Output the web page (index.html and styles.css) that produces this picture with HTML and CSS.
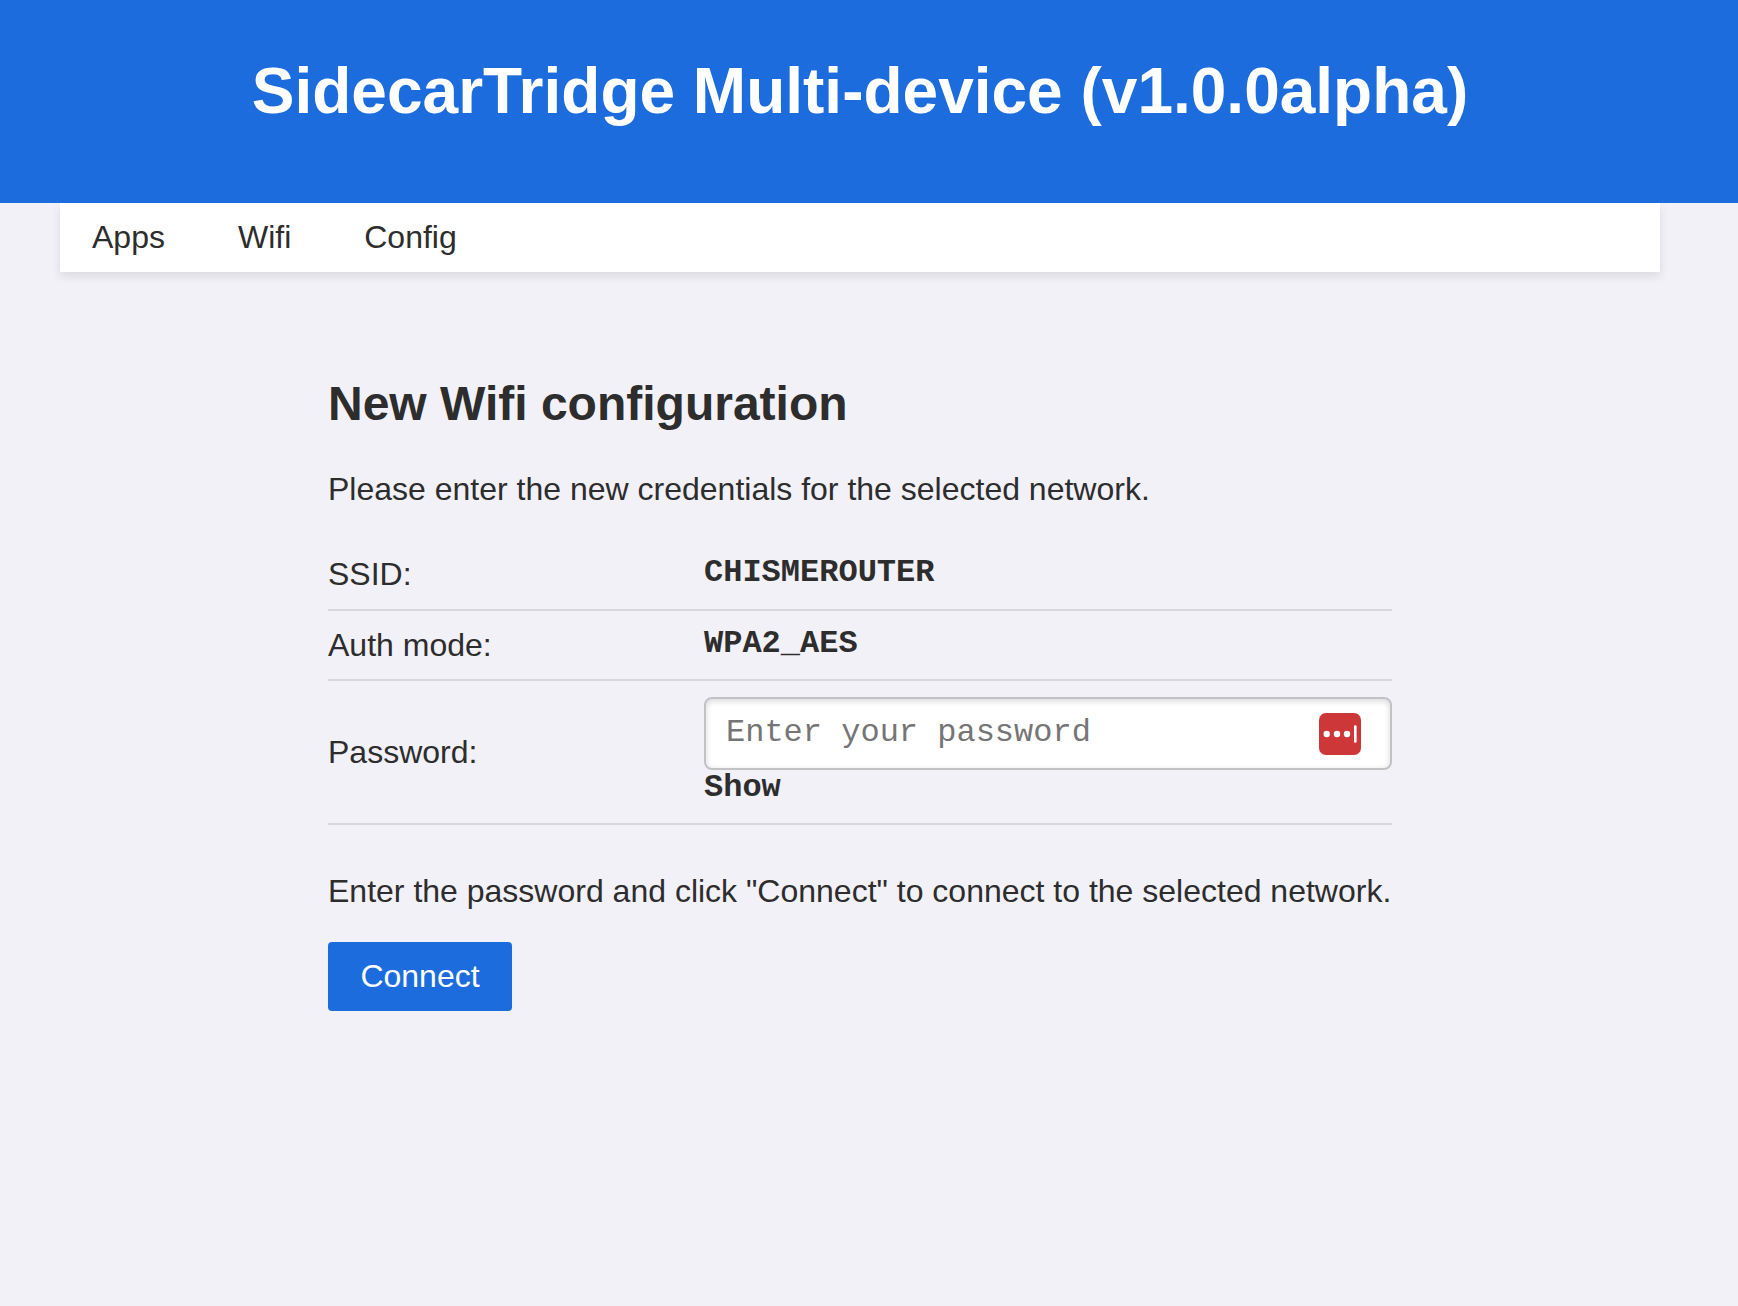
FILE: index.html
```html
<!DOCTYPE html>
<html lang="en">
<head>
<meta charset="utf-8">
<title>SidecarTridge Multi-device</title>
<link rel="stylesheet" href="styles.css">
</head>
<body>
<header class="header"><h1 class="header-title">SidecarTridge Multi-device (v1.0.0alpha)</h1></header>
<nav class="nav">
<a class="nav-link">Apps</a>
<a class="nav-link">Wifi</a>
<a class="nav-link">Config</a>
</nav>
<main class="content">
<h2 class="title">New Wifi configuration</h2>
<p class="text">Please enter the new credentials for the selected network.</p>
<div class="rows">
<div class="row row-ssid"><span class="label">SSID:</span><span class="value">CHISMEROUTER</span></div>
<div class="row"><span class="label">Auth mode:</span><span class="value">WPA2_AES</span></div>
<div class="row row-password">
<label class="label" for="password">Password:</label>
<div class="field">
<div class="input-box">
<input class="input" id="password" type="password" placeholder="Enter your password">
<svg class="manager-icon" width="42" height="42" viewBox="0 0 42 42"><rect width="42" height="42" rx="7" fill="#cd3737"/><g fill="#fff"><circle cx="7.7" cy="21" r="3.2"/><circle cx="18" cy="21" r="3.2"/><circle cx="28" cy="21" r="3.2"/><rect x="35" y="12.3" width="2.6" height="17.4" rx="1.3"/></g></svg>
</div>
<span class="show">Show</span>
</div>
</div>
</div>
<p class="text">Enter the password and click "Connect" to connect to the selected network.</p>
<button class="button">Connect</button>
</main>
</body>
</html>
```
FILE: styles.css
```css
* { box-sizing: border-box; }
body {
  margin: 0;
  background: #f2f1f8;
  color: #2d2d2d;
  font: 32px/36px "Liberation Sans", Arial, sans-serif;
}
.header {
  position: relative;
  height: 203px;
  padding: 55px 18px 0 0;
  background: #1c6cde;
  color: #fff;
  text-align: center;
}
.header-title { margin: 0; font-size: 64px; line-height: 72px; }
.nav {
  display: flex;
  gap: 73px;
  width: 1600px;
  height: 69px;
  margin-left: 60px;
  padding: 16px 32px;
  background: #fff;
  box-shadow: 0 4px 10px rgba(0, 0, 0, 0.1);
}
.content { width: 1064px; margin: 105px 0 0 328px; }
.title { margin: 0 0 40px; font-size: 48px; line-height: 54px; }
.text { margin: 0; white-space: nowrap; }
.rows { margin: 34px 0 48px; }
.row {
  display: grid;
  grid-template-columns: 376px 1fr;
  align-items: center;
  height: 70px;
  border-bottom: 2px solid #d8d7dc;
}
.row-ssid { padding-bottom: 2px; }
.row-password { height: 144px; }
.value, .show, .input { font-family: "Liberation Mono", "Courier New", monospace; }
.value, .show { font-weight: bold; }
.value { margin-top: -2px; }
.input-box {
  display: flex;
  align-items: center;
  height: 73px;
  padding: 0 29px 0 20px;
  border: 2px solid #c2c2c5;
  border-radius: 8px;
  background: #fff;
  box-shadow: inset 0 2px 6px rgba(0, 0, 0, 0.16);
}
.input {
  flex: 1;
  min-width: 0;
  padding: 0 0 2px;
  border: 0;
  outline: 0;
  background: transparent;
  font-size: 32px;
}
.input::placeholder { color: #757575; }
.show { display: block; height: 37px; line-height: 36px; }
.button {
  display: block;
  width: 184px;
  height: 69px;
  margin-top: 33px;
  padding: 0 0 2px;
  border: 0;
  border-radius: 4px;
  background: #1c6cde;
  color: #fff;
  font: inherit;
}
```
